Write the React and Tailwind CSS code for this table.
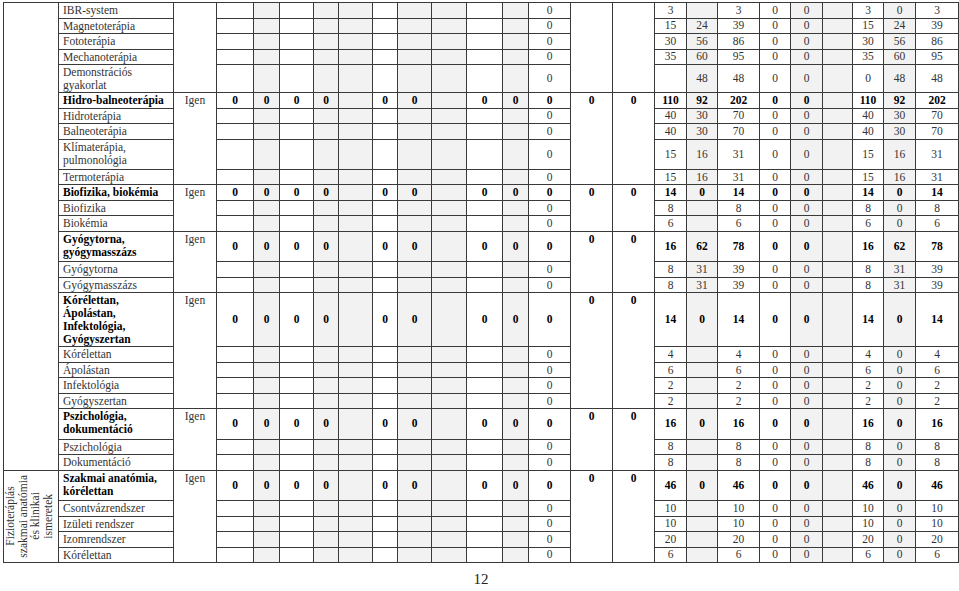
import React from 'react';

const S = 'h-[15.5px]';
const D = 'h-[30.4px]';

// column widths, shaded columns carry the light grey fill
const COLS = [
  'w-[55px]',
  'w-[115px]',
  'w-[43px]',
  'w-[37px]',
  'w-[26px] bg-[#f2f2f2]',
  'w-[34px]',
  'w-[25px] bg-[#f2f2f2]',
  'w-[34px] bg-[#f2f2f2]',
  'w-[25px]',
  'w-[34px] bg-[#f2f2f2]',
  'w-[35px] bg-[#f2f2f2]',
  'w-[36px]',
  'w-[26px] bg-[#f2f2f2]',
  'w-[42px]',
  'w-[42px]',
  'w-[42px]',
  'w-[32px]',
  'w-[31px] bg-[#f2f2f2]',
  'w-[42px]',
  'w-[31px]',
  'w-[32px] bg-[#f2f2f2]',
  'w-[30px] bg-[#f2f2f2]',
  'w-[31px]',
  'w-[32px] bg-[#f2f2f2]',
  'w-[43px]',
];

const groups = [
  {
    head: null,
    items: [
      ['IBR-system', S, '3 _ 3 0 0 _ 3 0 3'],
      ['Magnetoterápia', S, '15 24 39 0 0 _ 15 24 39'],
      ['Fototerápia', S, '30 56 86 0 0 _ 30 56 86'],
      ['Mechanoterápia', S, '35 60 95 0 0 _ 35 60 95'],
      ['Demonstrációs\ngyakorlat', 'h-[26.4px]', '_ 48 48 0 0 _ 0 48 48'],
    ],
  },
  {
    head: ['Hidro-balneoterápia', S, '110 92 202 0 0 _ 110 92 202'],
    items: [
      ['Hidroterápia', S, '40 30 70 0 0 _ 40 30 70'],
      ['Balneoterápia', S, '40 30 70 0 0 _ 40 30 70'],
      ['Klímaterápia,\npulmonológia', D, '15 16 31 0 0 _ 15 16 31'],
      ['Termoterápia', S, '15 16 31 0 0 _ 15 16 31'],
    ],
  },
  {
    head: ['Biofizika, biokémia', S, '14 0 14 0 0 _ 14 0 14'],
    items: [
      ['Biofizika', S, '8 _ 8 0 0 _ 8 0 8'],
      ['Biokémia', S, '6 _ 6 0 0 _ 6 0 6'],
    ],
  },
  {
    head: ['Gyógytorna,\ngyógymasszázs', D, '16 62 78 0 0 _ 16 62 78'],
    items: [
      ['Gyógytorna', S, '8 31 39 0 0 _ 8 31 39'],
      ['Gyógymasszázs', S, '8 31 39 0 0 _ 8 31 39'],
    ],
  },
  {
    head: ['Kórélettan,\nÁpolástan,\nInfektológia,\nGyógyszertan', 'h-[53px]', '14 0 14 0 0 _ 14 0 14'],
    items: [
      ['Kórélettan', S, '4 _ 4 0 0 _ 4 0 4'],
      ['Ápolástan', S, '6 _ 6 0 0 _ 6 0 6'],
      ['Infektológia', S, '2 _ 2 0 0 _ 2 0 2'],
      ['Gyógyszertan', S, '2 _ 2 0 0 _ 2 0 2'],
    ],
  },
  {
    head: ['Pszichológia,\ndokumentáció', D, '16 0 16 0 0 _ 16 0 16'],
    items: [
      ['Pszichológia', S, '8 _ 8 0 0 _ 8 0 8'],
      ['Dokumentáció', S, '8 _ 8 0 0 _ 8 0 8'],
    ],
  },
  {
    head: ['Szakmai anatómia,\nkórélettan', D, '46 0 46 0 0 _ 46 0 46'],
    items: [
      ['Csontvázrendszer', S, '10 _ 10 0 0 _ 10 0 10'],
      ['Izületi rendszer', S, '10 _ 10 0 0 _ 10 0 10'],
      ['Izomrendszer', S, '20 _ 20 0 0 _ 20 0 20'],
      ['Kórélettan', S, '6 _ 6 0 0 _ 6 0 6'],
    ],
  },
];

const HEAD_ZEROS = ['0', '0', '0', '0', '', '0', '0', '', '0', '0'];

const td = 'border border-[#3a3a3a] p-0';
const num = `${td} text-center align-middle`;

const split = (s) => s.split(' ').map((v) => (v === '_' ? '' : v));

const App = () => {
  const trs = [];
  let idx = 0;

  groups.forEach((g, gi) => {
    const rows = g.head ? [{ r: g.head, head: true }, ...g.items.map((r) => ({ r }))] : g.items.map((r) => ({ r }));
    const span = rows.length;

    rows.forEach(({ r, head }, i) => {
      const [name, h, vals] = r;
      const tone = head ? 'font-bold text-black' : 'text-[#333]';

      trs.push(
        <tr key={`${gi}-${i}`} className={h}>
          {idx === 0 && <td rowSpan={24} className={td} />}
          {idx === 24 && (
            <td rowSpan={5} className={`${td} text-center align-middle`}>
              <div className="mx-auto rotate-180 whitespace-nowrap text-[11.5px] leading-[12.7px] text-[#333] [writing-mode:vertical-rl]">
                Fizioterápiás
                <br />
                szakmai anatómia
                <br />
                és klinikai
                <br />
                ismeretek
              </div>
            </td>
          )}
          <td className={`${td} whitespace-pre-line pl-[4px] pt-[1px] align-top ${tone}`}>{name}</td>
          {i === 0 && (
            <td rowSpan={span} className={`${td} pt-[1px] text-center align-top text-[#333]`}>
              {head ? 'Igen' : ''}
            </td>
          )}
          {head
            ? HEAD_ZEROS.map((v, k) => (
                <td key={k} className={`${num} font-bold text-black`}>
                  {v}
                </td>
              ))
            : HEAD_ZEROS.map((v, k) => <td key={k} className={td} />)}
          <td className={`${num} ${tone}`}>0</td>
          {i === 0 && (
            <>
              <td rowSpan={span} className={`${td} pt-[1px] text-center align-top font-bold text-black`}>
                {head ? '0' : ''}
              </td>
              <td rowSpan={span} className={`${td} pt-[1px] text-center align-top font-bold text-black`}>
                {head ? '0' : ''}
              </td>
            </>
          )}
          {split(vals).map((v, k) => (
            <td key={k} className={`${num} ${tone}`}>
              {v}
            </td>
          ))}
        </tr>
      );
      idx += 1;
    });
  });

  return (
    <div className="h-[591px] w-[959px] overflow-hidden bg-white pl-[3px] pt-[2px] font-['Liberation_Serif','Times_New_Roman',serif]">
      <table className="w-[956px] table-fixed border-collapse text-[11.5px] leading-[13px]">
        <colgroup>
          {COLS.map((c, k) => (
            <col key={k} className={c} />
          ))}
        </colgroup>
        <tbody>{trs}</tbody>
      </table>
      <div className="mt-[9px] w-[956px] text-center text-[15px] leading-[15px] text-[#222]">12</div>
    </div>
  );
};

export default App;
